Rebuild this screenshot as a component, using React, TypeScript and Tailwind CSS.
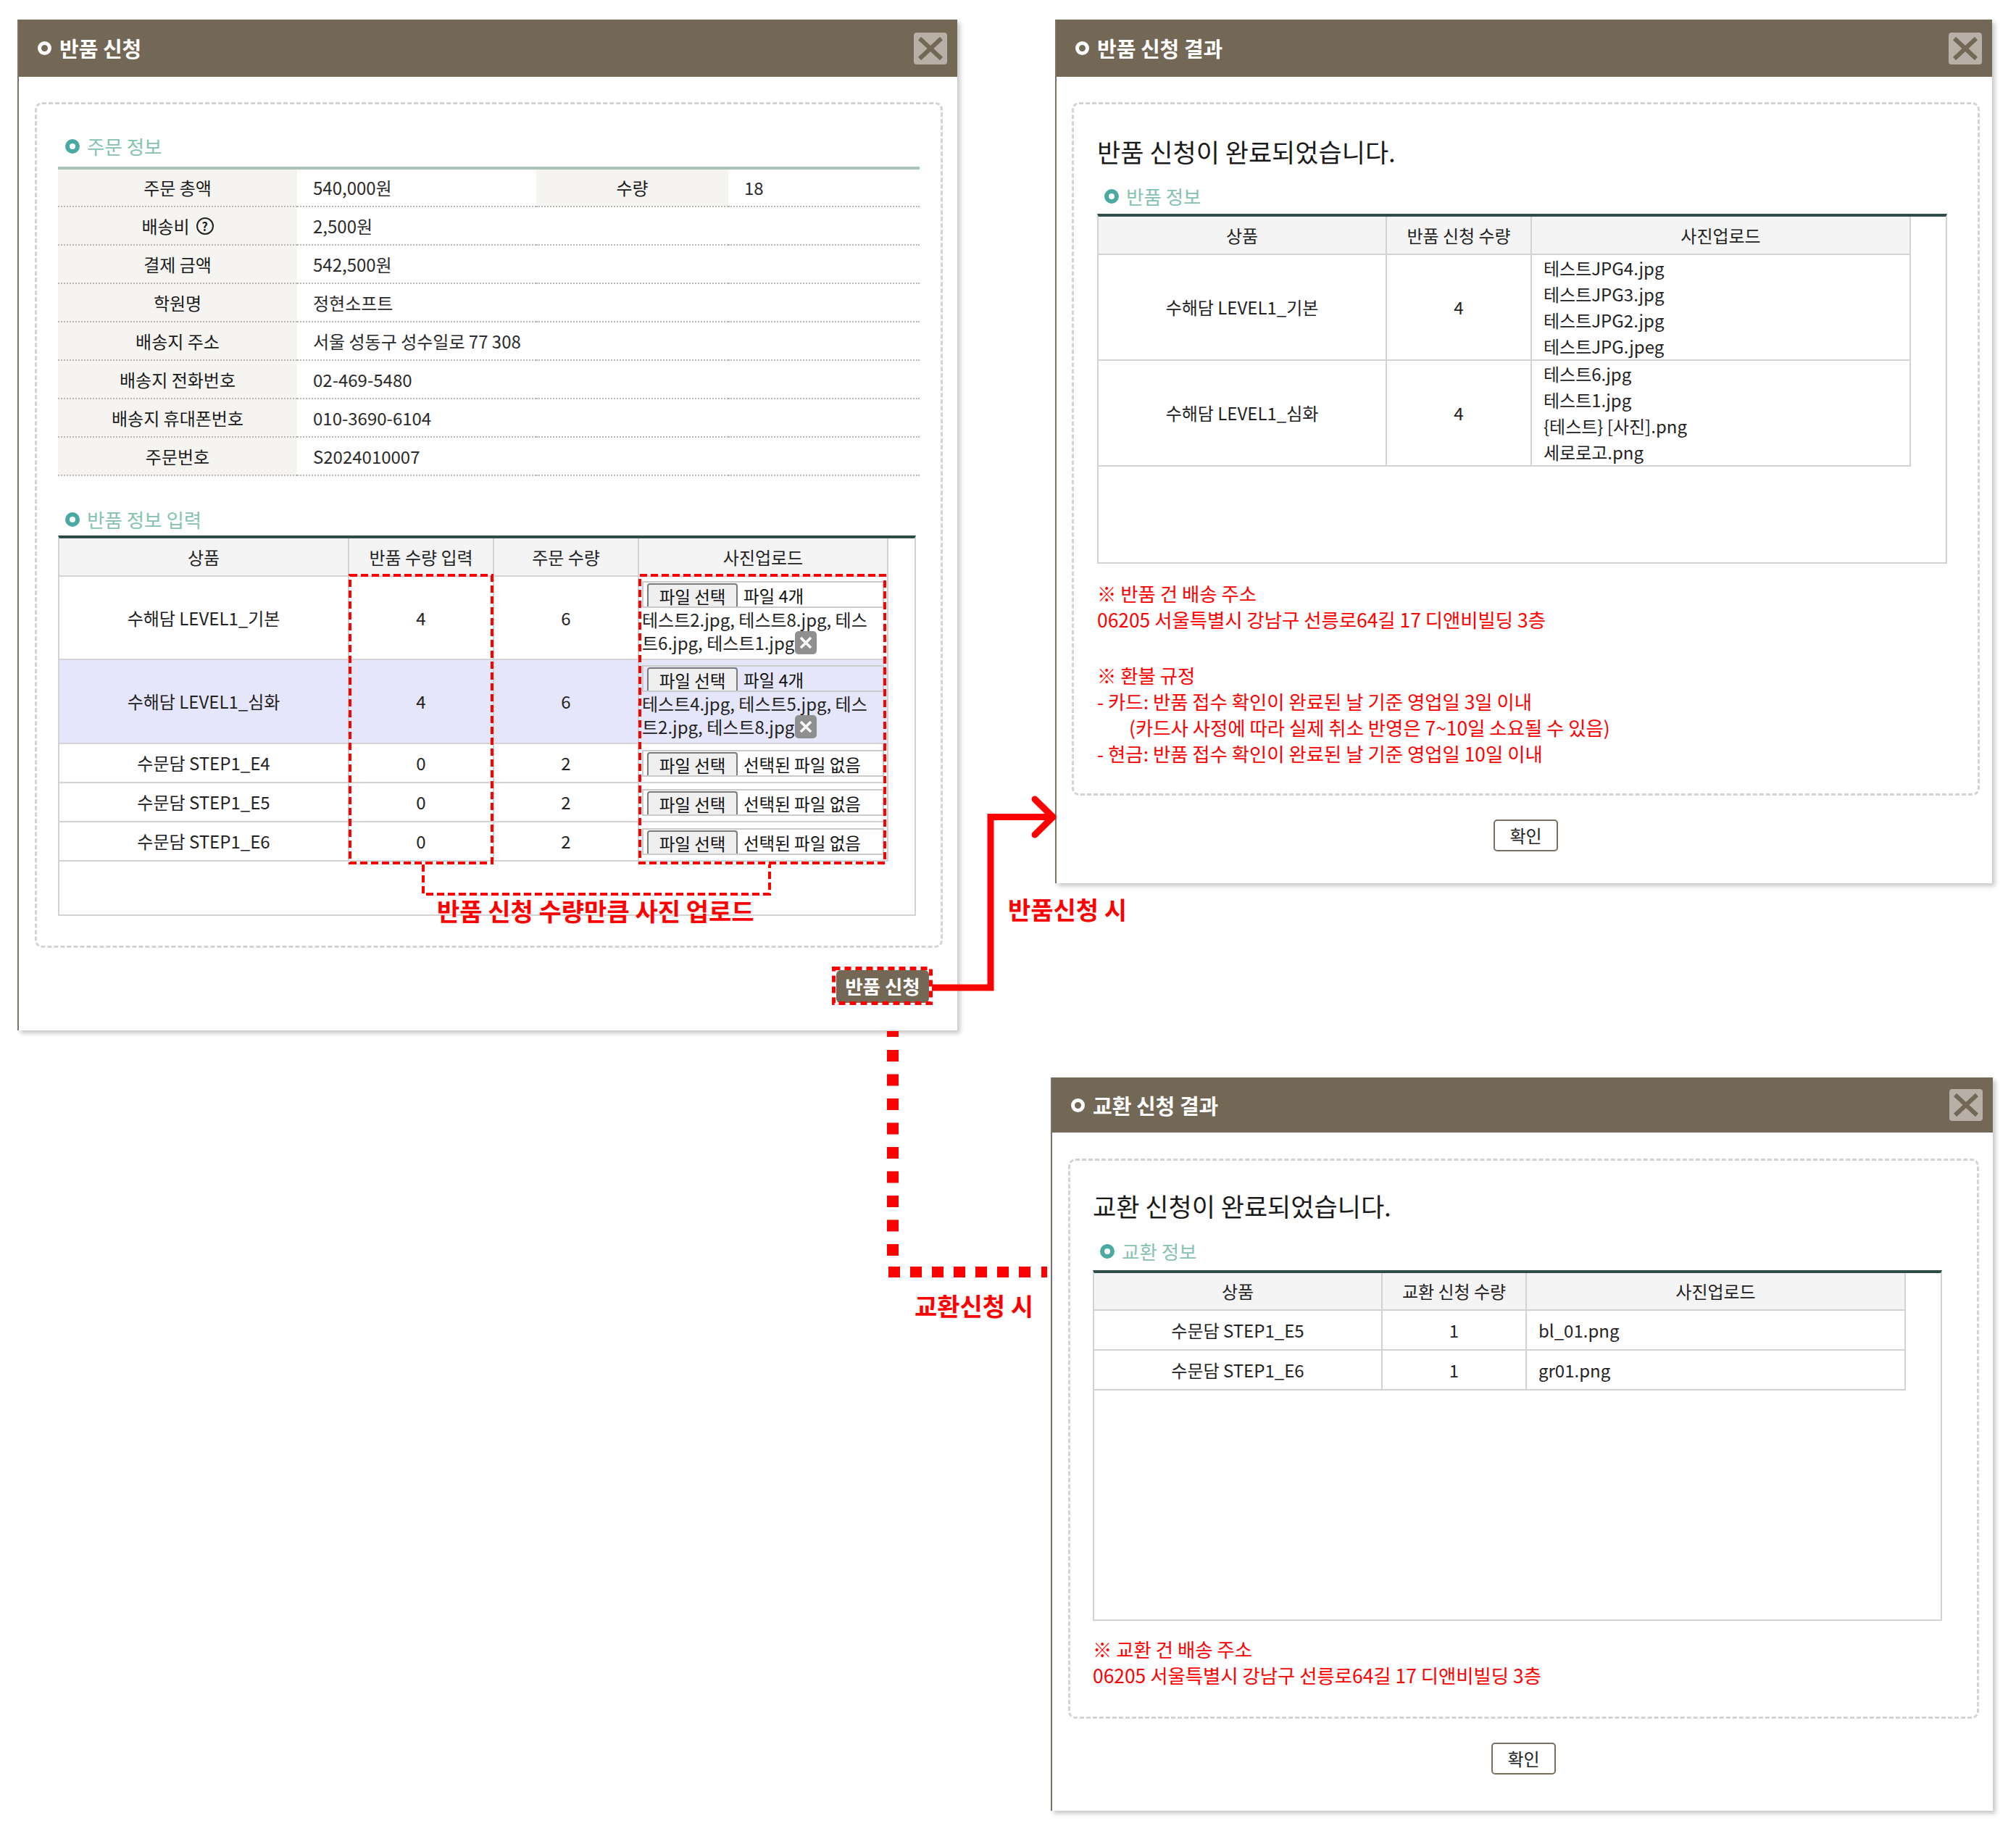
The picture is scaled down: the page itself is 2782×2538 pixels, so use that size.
import React from 'react';

const CloseButton = () => (
	<div className="flex h-[44px] w-[46px] items-center justify-center rounded-[4px] bg-[#b8afa6]">
		<svg width="36" height="32" viewBox="0 0 36 32">
			<path d="M3 2 L33 30 M33 2 L3 30" stroke="#736756" strokeWidth="6" />
		</svg>
	</div>
);

const DialogHeader = ({ title, className }: { title: string; className: string }) => (
	<div className={`flex items-center justify-between bg-[#736756] pr-[14px] ${className}`}>
		<div className="flex items-center">
			<span className="h-[19px] w-[19px] rounded-full border-[5px] border-white" />
			<span className="ml-[11px] text-[29px] font-bold leading-none text-white">{title}</span>
		</div>
		<CloseButton />
	</div>
);

const SectionTitle = ({ children, className = '' }: { children: React.ReactNode; className?: string }) => (
	<div className={`flex h-[30px] items-center pl-[10px] ${className}`}>
		<span className="h-[20px] w-[20px] rounded-full border-[6px] border-[#4aa9a1]" />
		<span className="ml-[10px] text-[26.5px] leading-none text-[#86c2b2]">{children}</span>
	</div>
);

const Note = ({ children, className = '' }: { children: React.ReactNode; className?: string }) => (
	<p className={`whitespace-nowrap text-[26.4px] leading-[36px] text-[#ff0000] ${className}`}>{children}</p>
);

const ConfirmButton = ({ className = '' }: { className?: string }) => (
	<div className={`flex justify-center ${className}`}>
		<button className="h-[44px] w-[89px] rounded-[5px] border-2 border-[#7a6e62] bg-white text-[24px] leading-none text-[#222]">
			확인
		</button>
	</div>
);

const XBadge = () => (
	<span className="ml-[1px] inline-flex h-[32px] w-[30px] items-center justify-center rounded-[5px] bg-[#8f8f8f]">
		<svg width="20" height="20" viewBox="0 0 20 20">
			<path d="M3 3L17 17M17 3L3 17" stroke="white" strokeWidth="3.5" />
		</svg>
	</span>
);

const FileBox = ({ text }: { text: string }) => (
	<div className="flex h-[37px] items-start overflow-hidden border-2 border-[#cbcbcb] pl-[5px] pt-px">
		<span className="h-[40px] w-[125px] shrink-0 rounded-[4px] border-2 border-[#7b7b7b] bg-[#efefef] text-center text-[23.5px] leading-[32px] text-[#111]">
			파일 선택
		</span>
		<span className="ml-[8px] whitespace-nowrap text-[23.5px] leading-[34px] text-[#111]">{text}</span>
	</div>
);

const label = 'bg-[#f5f4f0] text-center font-normal text-[#1a1a1a]';
const value = 'pl-[22px] text-left';

const orderRows = [
	['배송비', '2,500원'],
	['결제 금액', '542,500원'],
	['학원명', '정현소프트'],
	['배송지 주소', '서울 성동구 성수일로 77 308'],
	['배송지 전화번호', '02-469-5480'],
	['배송지 휴대폰번호', '010-3690-6104'],
	['주문번호', 'S2024010007'],
];

const OrderTable = () => (
	<table className="w-[1189px] table-fixed border-collapse border-t-4 border-t-[#a9c3b8] text-[24px] text-[#2a2a2a]">
		<colgroup>
			<col className="w-[330px]" />
			<col className="w-[330px]" />
			<col className="w-[265px]" />
			<col className="w-[264px]" />
		</colgroup>
		<tbody>
			<tr className="h-[53px] border-b-2 border-dotted border-b-[#b8b8b8]">
				<th className={label}>주문 총액</th>
				<td className={value}>540,000원</td>
				<th className={label}>수량</th>
				<td className={value}>18</td>
			</tr>
			{orderRows.map(([k, v]) => (
				<tr key={k} className="h-[53px] border-b-2 border-dotted border-b-[#b8b8b8]">
					<th className={label}>
						{k === '배송비' ? (
							<span className="inline-flex items-center">
								배송비
								<span className="ml-[9px] inline-flex h-[24px] w-[24px] items-center justify-center rounded-full border-[2.5px] border-[#222] text-[16px] font-bold leading-none">
									?
								</span>
							</span>
						) : (
							k
						)}
					</th>
					<td className={value} colSpan={3}>
						{v}
					</td>
				</tr>
			))}
		</tbody>
	</table>
);

const cell = 'border-r-2 border-b-2 border-[#d3d3d3] text-center align-middle';

const inputRows = [
	{ name: '수문담 STEP1_E4' },
	{ name: '수문담 STEP1_E5' },
	{ name: '수문담 STEP1_E6' },
];

const ReturnInputTable = () => (
	<div className="h-[525px] w-[1184px] border-x-2 border-b-2 border-t-4 border-x-[#d3d3d3] border-b-[#d3d3d3] border-t-[#2e4d48]">
		<table className="w-[1143px] table-fixed border-collapse text-[24px] text-[#222]">
			<colgroup>
				<col className="w-[399px]" />
				<col className="w-[200px]" />
				<col className="w-[200px]" />
				<col className="w-[344px]" />
			</colgroup>
			<thead>
				<tr className="h-[52px] bg-[#f4f4f4]">
					<th className={`${cell} font-normal`}>상품</th>
					<th className={`${cell} font-normal`}>반품 수량 입력</th>
					<th className={`${cell} font-normal`}>주문 수량</th>
					<th className={`${cell} font-normal`}>사진업로드</th>
				</tr>
			</thead>
			<tbody>
				<tr className="h-[115px]">
					<td className={cell}>수해담 LEVEL1_기본</td>
					<td className={cell}>4</td>
					<td className={cell}>6</td>
					<td className={`${cell} px-[4px] text-left`}>
						<FileBox text="파일 4개" />
						<div className="whitespace-nowrap leading-[32px]">테스트2.jpg, 테스트8.jpg, 테스</div>
						<div className="flex items-center whitespace-nowrap leading-[32px]">
							트6.jpg, 테스트1.jpg
							<XBadge />
						</div>
					</td>
				</tr>
				<tr className="h-[116px] bg-[#e6e6fa]">
					<td className={cell}>수해담 LEVEL1_심화</td>
					<td className={cell}>4</td>
					<td className={cell}>6</td>
					<td className={`${cell} px-[4px] text-left`}>
						<FileBox text="파일 4개" />
						<div className="whitespace-nowrap leading-[32px]">테스트4.jpg, 테스트5.jpg, 테스</div>
						<div className="flex items-center whitespace-nowrap leading-[32px]">
							트2.jpg, 테스트8.jpg
							<XBadge />
						</div>
					</td>
				</tr>
				{inputRows.map((r) => (
					<tr key={r.name} className="h-[54px]">
						<td className={cell}>{r.name}</td>
						<td className={cell}>0</td>
						<td className={cell}>2</td>
						<td className={`${cell} px-[4px] text-left`}>
							<FileBox text="선택된 파일 없음" />
						</td>
					</tr>
				))}
			</tbody>
		</table>
	</div>
);

const ReturnDialog = () => (
	<div className="absolute left-[24px] top-[27px] h-[1395px] w-[1297px] border-l-2 border-l-[#7d7266] bg-white shadow-[4px_4px_6px_rgba(0,0,0,0.22)]">
		<DialogHeader title="반품 신청" className="h-[79px] pl-[26px]" />
		<div className="pl-[22px] pr-[20px] pt-[35px]">
			<div className="h-[1167px] rounded-[10px] border-[3px] border-dashed border-[#d3d3d3] px-[29px] pt-[43px]">
				<SectionTitle className="mb-[13px]">주문 정보</SectionTitle>
				<OrderTable />
				<SectionTitle className="mb-[7px] mt-[45px]">반품 정보 입력</SectionTitle>
				<ReturnInputTable />
			</div>
			<div className="mt-[31px] flex justify-end pr-[19px]">
				<button className="h-[45px] w-[128px] rounded-[6px] bg-[#736756] text-[26.5px] font-bold leading-none text-white">
					반품 신청
				</button>
			</div>
		</div>
	</div>
);

const resultRows = [
	{ name: '수해담 LEVEL1_기본', qty: 4, files: ['테스트JPG4.jpg', '테스트JPG3.jpg', '테스트JPG2.jpg', '테스트JPG.jpeg'] },
	{ name: '수해담 LEVEL1_심화', qty: 4, files: ['테스트6.jpg', '테스트1.jpg', '{테스트} [사진].png', '세로로고.png'] },
];

const ReturnResultDialog = () => (
	<div className="absolute left-[1456px] top-[27px] h-[1192px] w-[1293px] border-l-2 border-l-[#7d7266] bg-white shadow-[4px_4px_6px_rgba(0,0,0,0.22)]">
		<DialogHeader title="반품 신청 결과" className="h-[79px] pl-[26px]" />
		<div className="pl-[21px] pr-[17px] pt-[35px]">
			<div className="h-[957px] rounded-[10px] border-[3px] border-dashed border-[#d3d3d3] pl-[32px] pt-[43px]">
				<h2 className="h-[44px] text-[35px] font-normal leading-[44px] text-[#1a1a1a]">반품 신청이 완료되었습니다.</h2>
				<SectionTitle className="mb-[9px] mt-[25px]">반품 정보</SectionTitle>
				<div className="h-[483px] w-[1173px] border-x-2 border-b-2 border-t-4 border-x-[#d3d3d3] border-b-[#d3d3d3] border-t-[#2e4d48]">
					<table className="w-[1120px] table-fixed border-collapse text-[24px] text-[#222]">
						<colgroup>
							<col className="w-[397px]" />
							<col className="w-[200px]" />
							<col className="w-[523px]" />
						</colgroup>
						<thead>
							<tr className="h-[52px] bg-[#f4f4f4]">
								<th className={`${cell} font-normal`}>상품</th>
								<th className={`${cell} font-normal`}>반품 신청 수량</th>
								<th className={`${cell} font-normal`}>사진업로드</th>
							</tr>
						</thead>
						<tbody>
							{resultRows.map((r) => (
								<tr key={r.name} className="h-[146px]">
									<td className={cell}>{r.name}</td>
									<td className={cell}>{r.qty}</td>
									<td className={`${cell} pl-[16px] text-left`}>
										{r.files.map((f) => (
											<div key={f} className="leading-[36px]">
												{f}
											</div>
										))}
									</td>
								</tr>
							))}
						</tbody>
					</table>
				</div>
				<div className="mt-[23px]">
					<Note>※ 반품 건 배송 주소</Note>
					<Note>06205 서울특별시 강남구 선릉로64길 17 디앤비빌딩 3층</Note>
					<Note className="mt-[41px]">※ 환불 규정</Note>
					<Note>- 카드: 반품 접수 확인이 완료된 날 기준 영업일 3일 이내</Note>
					<Note className="pl-[44px]">(카드사 사정에 따라 실제 취소 반영은 7~10일 소요될 수 있음)</Note>
					<Note>- 현금: 반품 접수 확인이 완료된 날 기준 영업일 10일 이내</Note>
				</div>
			</div>
			<ConfirmButton className="mt-[33px]" />
		</div>
	</div>
);

const exchangeRows = [
	{ name: '수문담 STEP1_E5', file: 'bl_01.png' },
	{ name: '수문담 STEP1_E6', file: 'gr01.png' },
];

const ExchangeResultDialog = () => (
	<div className="absolute left-[1450px] top-[1487px] h-[1012px] w-[1300px] border-l-2 border-l-[#7d7266] bg-white shadow-[4px_4px_6px_rgba(0,0,0,0.22)]">
		<DialogHeader title="교환 신청 결과" className="h-[76px] pl-[26px]" />
		<div className="pl-[22px] pr-[19px] pt-[36px]">
			<div className="h-[773px] rounded-[10px] border-[3px] border-dashed border-[#d3d3d3] pl-[31px] pt-[40px]">
				<h2 className="h-[44px] text-[35px] font-normal leading-[44px] text-[#1a1a1a]">교환 신청이 완료되었습니다.</h2>
				<SectionTitle className="mb-[11px] mt-[26px]">교환 정보</SectionTitle>
				<div className="h-[484px] w-[1172px] border-x-2 border-b-2 border-t-4 border-x-[#d3d3d3] border-b-[#d3d3d3] border-t-[#2e4d48]">
					<table className="w-[1119px] table-fixed border-collapse text-[24px] text-[#222]">
						<colgroup>
							<col className="w-[397px]" />
							<col className="w-[199px]" />
							<col className="w-[523px]" />
						</colgroup>
						<thead>
							<tr className="h-[51px] bg-[#f4f4f4]">
								<th className={`${cell} font-normal`}>상품</th>
								<th className={`${cell} font-normal`}>교환 신청 수량</th>
								<th className={`${cell} font-normal`}>사진업로드</th>
							</tr>
						</thead>
						<tbody>
							{exchangeRows.map((r) => (
								<tr key={r.name} className="h-[55px]">
									<td className={cell}>{r.name}</td>
									<td className={cell}>1</td>
									<td className={`${cell} pl-[16px] text-left`}>{r.file}</td>
								</tr>
							))}
						</tbody>
					</table>
				</div>
				<div className="mt-[21px]">
					<Note>※ 교환 건 배송 주소</Note>
					<Note>06205 서울특별시 강남구 선릉로64길 17 디앤비빌딩 3층</Note>
				</div>
			</div>
			<ConfirmButton className="mt-[33px]" />
		</div>
	</div>
);

const vDots = [1449, 1482.5, 1516, 1549.5, 1583, 1616.5, 1650, 1683.5, 1717];
const hDots = [1226, 1256, 1286, 1316, 1346, 1376, 1406];

const Annotations = () => (
	<>
		<svg className="pointer-events-none absolute left-0 top-0" width="2782" height="2538">
			<g fill="none" stroke="#ff0000" strokeWidth="4" strokeDasharray="10 5">
				<rect x="483" y="794" width="196" height="397" />
				<rect x="883" y="794" width="338" height="397" />
				<path d="M584 1193 V1234 H1062 V1193" />
			</g>
			<rect x="1150.5" y="1336.5" width="134" height="48" fill="none" stroke="#ff0000" strokeWidth="5" strokeDasharray="9 6" />
			<path d="M1286 1363 H1367 V1127.5 H1452" fill="none" stroke="#ff0000" strokeWidth="9" />
			<path d="M1428 1103 L1453 1127.5 L1428 1152" fill="none" stroke="#ff0000" strokeWidth="9" strokeLinecap="round" strokeLinejoin="round" />
			<g fill="#ff0000">
				<rect x="1224" y="1423" width="16" height="8" />
				{vDots.map((y) => (
					<rect key={y} x="1224" y={y} width="16" height="16" />
				))}
				{hDots.map((x) => (
					<rect key={x} x={x} y="1748" width="16" height="15" />
				))}
				<rect x="1437" y="1748" width="8" height="15" />
			</g>
		</svg>
		<div className="absolute left-[603px] top-[1238px] whitespace-nowrap text-[34px] font-bold leading-[38px] text-[#ff0000]">
			반품 신청 수량만큼 사진 업로드
		</div>
		<div className="absolute left-[1391px] top-[1236px] whitespace-nowrap text-[34px] font-bold leading-[38px] text-[#ff0000]">
			반품신청 시
		</div>
		<div className="absolute left-[1262px] top-[1783px] whitespace-nowrap text-[34px] font-bold leading-[38px] text-[#ff0000]">
			교환신청 시
		</div>
	</>
);

export default function App() {
	return (
		<div className="relative h-[2538px] w-[2782px] overflow-hidden bg-white font-['Noto_Sans_CJK_KR','Noto_Sans',sans-serif] text-[#222]">
			<ReturnDialog />
			<ReturnResultDialog />
			<ExchangeResultDialog />
			<Annotations />
		</div>
	);
}
